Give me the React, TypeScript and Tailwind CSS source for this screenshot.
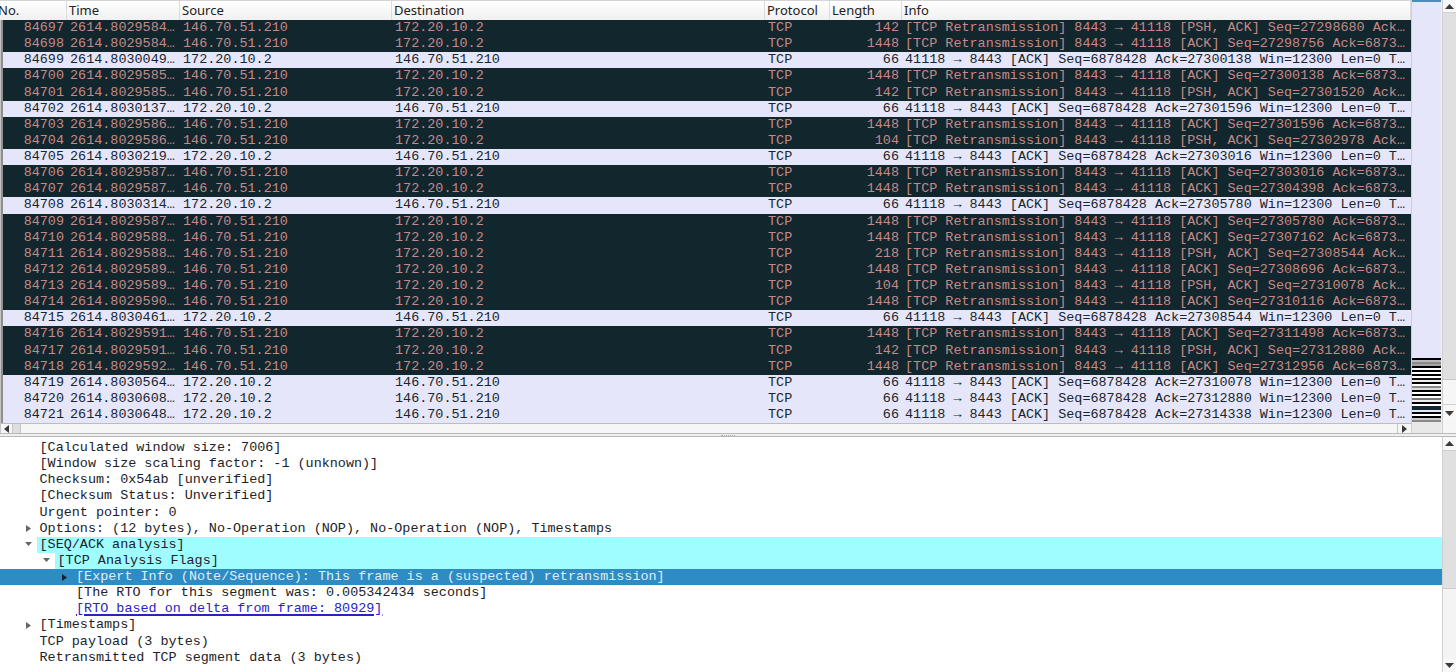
import React from "react";

const D = "146.70.51.210";
const L = "172.20.10.2";
type Row = [number, string, number, string];
const rt = (f: string, s: number) => `[TCP Retransmission] 8443 → 41118 [${f}] Seq=${s} ` + (f === "ACK" ? "Ack=6873…" : "Ack…");
const ack = (a: number) => `41118 → 8443 [ACK] Seq=6878428 Ack=${a} Win=12300 Len=0 T…`;
const rows: Row[] = [
  [84697, "2614.8029584…", 142, rt("PSH, ACK", 27298680)],
  [84698, "2614.8029584…", 1448, rt("ACK", 27298756)],
  [84699, "2614.8030049…", 66, ack(27300138)],
  [84700, "2614.8029585…", 1448, rt("ACK", 27300138)],
  [84701, "2614.8029585…", 142, rt("PSH, ACK", 27301520)],
  [84702, "2614.8030137…", 66, ack(27301596)],
  [84703, "2614.8029586…", 1448, rt("ACK", 27301596)],
  [84704, "2614.8029586…", 104, rt("PSH, ACK", 27302978)],
  [84705, "2614.8030219…", 66, ack(27303016)],
  [84706, "2614.8029587…", 1448, rt("ACK", 27303016)],
  [84707, "2614.8029587…", 1448, rt("ACK", 27304398)],
  [84708, "2614.8030314…", 66, ack(27305780)],
  [84709, "2614.8029587…", 1448, rt("ACK", 27305780)],
  [84710, "2614.8029588…", 1448, rt("ACK", 27307162)],
  [84711, "2614.8029588…", 218, rt("PSH, ACK", 27308544)],
  [84712, "2614.8029589…", 1448, rt("ACK", 27308696)],
  [84713, "2614.8029589…", 104, rt("PSH, ACK", 27310078)],
  [84714, "2614.8029590…", 1448, rt("ACK", 27310116)],
  [84715, "2614.8030461…", 66, ack(27308544)],
  [84716, "2614.8029591…", 1448, rt("ACK", 27311498)],
  [84717, "2614.8029591…", 142, rt("PSH, ACK", 27312880)],
  [84718, "2614.8029592…", 1448, rt("ACK", 27312956)],
  [84719, "2614.8030564…", 66, ack(27310078)],
  [84720, "2614.8030608…", 66, ack(27312880)],
  [84721, "2614.8030648…", 66, ack(27314338)],
];

const heads: [string, string][] = [
  ["No.", "w-[67px] pl-0"],
  ["Time", "w-[113px] pl-[2px]"],
  ["Source", "w-[212px] pl-[2px]"],
  ["Destination", "w-[373px] pl-[2px]"],
  ["Protocol", "w-[65px] pl-[2px]"],
  ["Length", "w-[72px] pl-[2px]"],
  ["Info", "flex-1 pl-[2px]"],
];

function Up() {
  return <svg width="9" height="5" viewBox="0 0 9 5"><path d="M4.5 0L9 5H0z" fill="#3a3a3a" /></svg>;
}
function Down() {
  return <svg width="9" height="5" viewBox="0 0 9 5"><path d="M4.5 5L9 0H0z" fill="#3a3a3a" /></svg>;
}
function LeftA() {
  return <svg width="5" height="8" viewBox="0 0 5 8"><path d="M0 4L5 0V8z" fill="#3a3a3a" /></svg>;
}
function RightA() {
  return <svg width="5" height="8" viewBox="0 0 5 8"><path d="M5 4L0 0V8z" fill="#3a3a3a" /></svg>;
}

function PacketRow({ r }: { r: Row }) {
  const dark = r[2] !== 66;
  return (
    <div
      className={
        "flex h-[16.125px] items-center whitespace-nowrap overflow-hidden leading-[16px] " +
        (dark ? "bg-[#12262e] text-[#c58a87]" : "bg-[#e6e6fb] text-[#17252c]")
      }
    >
      <div className="w-[61px] shrink-0 text-right">{r[0]}</div>
      <div className="w-[113px] shrink-0 pl-[6px]">{r[1]}</div>
      <div className="w-[212px] shrink-0 pl-[6px]">{dark ? D : L}</div>
      <div className="w-[373px] shrink-0 pl-[6px]">{dark ? L : D}</div>
      <div className="w-[65px] shrink-0 pl-[6px]">TCP</div>
      <div className="w-[72px] shrink-0 text-right">{r[2]}</div>
      <div className="flex-1 pl-[6px] overflow-hidden">{r[3]}</div>
    </div>
  );
}

const stripes = [
  "#000", "#bbb", "#8a8a8a", "#a5a5a5", "#000", "#fff", "#000", "#fff", "#000", "#fff", "#111", "#eee", "#000", "#fff", "#8a8a8a", "#ddd",
  "#000", "#fff", "#000", "#fff", "#777", "#eee", "#000", "#fff", "#12262e", "#12262e", "#e6e6fb", "#000", "#fff", "#000", "#ccc", "#888",
];

type Tree = { t: string; col: string; arrow?: "r" | "d"; bg?: boolean; sel?: boolean; link?: boolean };
const tree: Tree[] = [
  { t: "[Calculated window size: 7006]", col: "w-[36.5px]" },
  { t: "[Window size scaling factor: -1 (unknown)]", col: "w-[36.5px]" },
  { t: "Checksum: 0x54ab [unverified]", col: "w-[36.5px]" },
  { t: "[Checksum Status: Unverified]", col: "w-[36.5px]" },
  { t: "Urgent pointer: 0", col: "w-[36.5px]" },
  { t: "Options: (12 bytes), No-Operation (NOP), No-Operation (NOP), Timestamps", col: "w-[36.5px]", arrow: "r" },
  { t: "[SEQ/ACK analysis]", col: "w-[36.5px]", arrow: "d", bg: true },
  { t: "[TCP Analysis Flags]", col: "w-[54.5px]", arrow: "d", bg: true },
  { t: "[Expert Info (Note/Sequence): This frame is a (suspected) retransmission]", col: "w-[73px]", arrow: "r", sel: true },
  { t: "[The RTO for this segment was: 0.005342434 seconds]", col: "w-[73px]" },
  { t: "[RTO based on delta from frame: 80929]", col: "w-[73px]", link: true },
  { t: "[Timestamps]", col: "w-[36.5px]", arrow: "r" },
  { t: "TCP payload (3 bytes)", col: "w-[36.5px]" },
  { t: "Retransmitted TCP segment data (3 bytes)", col: "w-[36.5px]" },
];

function TreeRow({ n }: { n: Tree }) {
  const color = n.sel ? "text-[#dcf0fa]" : n.link ? "text-[#2a22c8]" : "text-[#1c2228]";
  return (
    <div className={"flex h-[16.125px] items-center leading-[16px] whitespace-nowrap " + (n.sel ? "bg-[#2f8bc3] " : "")}>
      <div className={n.col + " shrink-0 flex justify-end items-center pr-[6px] h-full"}>
        {n.arrow === "r" && (
          <svg width="5" height="7" viewBox="0 0 5 7"><path d="M0 0L5 3.5L0 7z" fill={n.sel ? "#123" : "#666"} /></svg>
        )}
        {n.arrow === "d" && (
          <svg width="7" height="5" viewBox="0 0 7 5" className="mr-[-1px]"><path d="M0 0H7L3.5 4z" fill="#666" /></svg>
        )}
      </div>
      <div className={"h-full flex-1 pl-[3px] " + (n.bg ? "bg-[#a0fdff] " : "")}>
        <span className={color + (n.link ? " underline decoration-[1.5px] underline-offset-[2px]" : "")}>{n.t}</span>
      </div>
    </div>
  );
}

export default function App() {
  return (
    <div className="w-[1456px] h-[672px] overflow-hidden bg-[#f0f0f0] flex flex-col text-[13.45px] [font-family:'Liberation_Mono',monospace]">
      <div className="flex h-[434px] shrink-0 border-b border-[#b8b8b8]">
        <div className="flex flex-col w-[1411px] border-l-[1px] border-l-[#c4c4c4]">
          <div className="flex h-[20px] -ml-[1px] bg-gradient-to-b from-[#ffffff] to-[#f0f0f0] text-[13px] text-[#222] [font-family:'Noto_Sans',sans-serif] items-center border-t border-[#d4d4d4]">
            {heads.map(([h, w], i) => (
              <div key={h} className={w + " shrink-0 h-full flex items-center border-r border-[#dcdcdc] overflow-hidden"}>
                <span className={i === 0 ? "-ml-[2px]" : ""}>{h}</span>
              </div>
            ))}
          </div>
          <div className="flex-none border-l-[2px] border-l-[#8f8f8f]">
            {rows.map((r) => (
              <PacketRow key={r[0]} r={r} />
            ))}
          </div>
          <div className="h-[1px] bg-[#bdbdbd]" />
          <div className="flex flex-1 items-stretch bg-[#f6f6f6]">
            <div className="w-[11px] flex items-center justify-center"><LeftA /></div>
            <div className="w-[9px] bg-[#dedede] border-x border-[#c6c6c6]" />
            <div className="flex-1" />
            <div className="w-[14px] flex items-center justify-center border-l border-[#c6c6c6]"><RightA /></div>
          </div>
        </div>
        <div className="w-[31px] flex flex-col border-l border-[#cfcfcf] pr-[1px]">
          <div className="h-[2px] bg-[#4a8fb8]" />
          <div className="h-[356px] bg-[#e6e6fb]" />
          {stripes.map((c, i) => (
            <div key={i} className="h-[2px]" style={{ backgroundColor: c }} />
          ))}
          <div className="flex-1 bg-[#e8e8e8]" />
        </div>
        <div className="w-[14px] flex flex-col bg-[#f6f6f6] border-l border-[#d0d0d0]">
          <div className="h-[13px] shrink-0 bg-[#f8f8f8] flex items-center justify-center border-b border-[#d0d0d0]"><Up /></div>
          <div className="h-[367px] shrink-0 bg-[#e0e0e0] border-b border-[#c8c8c8]" />
          <div className="flex-1" />
          <div className="h-[17px] shrink-0 bg-[#f8f8f8] flex items-center justify-center border-t border-[#d0d0d0] mb-[12px]"><Down /></div>
        </div>
      </div>
      <div className="h-[2px] shrink-0 bg-[#f0f0f0] flex justify-center items-center">
        <div className="w-[14px] border-t border-dotted border-[#aaa]" />
      </div>
      <div className="flex flex-1 bg-white border-t border-[#b8b8b8] overflow-hidden">
        <div className="flex-1 pt-[3px] overflow-hidden">
          {tree.map((n) => (
            <TreeRow key={n.t} n={n} />
          ))}
        </div>
        <div className="w-[14px] flex flex-col bg-[#f4f4f4] border-l border-[#d0d0d0]">
          <div className="h-[13px] shrink-0 bg-[#f8f8f8] flex items-center justify-center"><Up /></div>
          <div className="h-[139px] shrink-0 bg-[#e0e0e0] border-y border-[#cccccc]" />
          <div className="flex-1" />
          <div className="h-[13px] shrink-0 bg-[#f8f8f8] flex items-center justify-center"><Down /></div>
        </div>
      </div>
    </div>
  );
}
